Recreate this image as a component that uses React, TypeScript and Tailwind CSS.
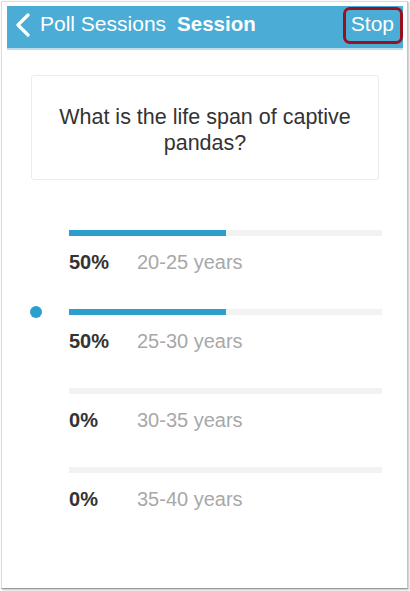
const options = [
  { pct: 50, label: "20-25 years", selected: false },
  { pct: 50, label: "25-30 years", selected: true },
  { pct: 0, label: "30-35 years", selected: false },
  { pct: 0, label: "35-40 years", selected: false },
];

function Chevron() {
  return (
    <svg width="16" height="24" viewBox="0 0 16 24" className="block">
      <path d="M13 2 L3 12 L13 22" fill="none" stroke="white" strokeWidth="3.2" strokeLinecap="round" strokeLinejoin="round" />
    </svg>
  );
}

export default function App() {
  return (
    <div className="h-[591px] w-[410px] overflow-hidden bg-white font-['Liberation_Sans',Arial,sans-serif]">
      <div className="ml-px mt-px h-[588px] w-[407px] border border-[#dcdcdc] border-b-[#9a9a9a] border-r-[#c4c4c4] pl-[5px] pr-[4px] pt-[4px] shadow-[1px_1px_2px_rgba(0,0,0,0.25)]">
        <div className="relative flex h-[44px] items-start border-b-2 border-[#bcdcea] bg-[#4bacd6] pl-[8px] pt-[5px] text-white">
          <div className="mt-[2px]">
            <Chevron />
          </div>
          <span className="ml-[9px] text-[21px] leading-[26px]">Poll Sessions</span>
          <span className="ml-[11px] text-[20.5px] font-bold leading-[26px]">Session</span>
          <span className="ml-auto mr-[9px] text-[21px] leading-[26px]">Stop</span>
          <div className="absolute right-0 top-[1px] h-[37px] w-[60px] rounded-[7px] border-[3.5px] border-[#98121e]" />
        </div>

        <div className="mx-[24px] mt-[25px] h-[105px] rounded-[3px] border border-[#ececec] px-[20px] pt-[28px] text-center text-[21.5px] leading-[26px] text-[#333]">
          What is the life span of captive pandas?
        </div>

        <div className="mt-[50px] flex flex-col gap-[35px]">
          {options.map((o) => (
            <div key={o.label} className="flex">
              <div className="flex w-[62px] items-start">
                {o.selected && <div className="ml-[23px] mt-[-3px] h-[12px] w-[12px] rounded-full bg-[#2b9ece]" />}
              </div>
              <div className="mr-[21px] flex-1">
                <div className="h-[6px] bg-[#f2f2f2]">
                  <div className="h-full bg-[#2b9ece]" style={{ width: `${o.pct}%` }} />
                </div>
                <div className="mt-[14px] flex text-[20px] leading-[24px]">
                  <span className="w-[68px] font-bold text-[#333]">{o.pct}%</span>
                  <span className="text-[#a8a8a8]">{o.label}</span>
                </div>
              </div>
            </div>
          ))}
        </div>
      </div>
    </div>
  );
}
